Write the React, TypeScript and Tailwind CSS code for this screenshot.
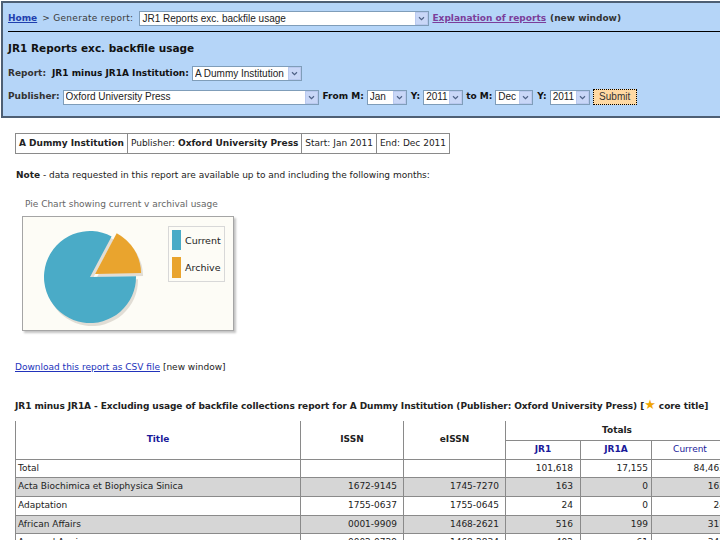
import React from "react";

type Row = { title: string; issn: string; eissn: string; jr1: string; jr1a: string; current: string };

const rows: Row[] = [
  { title: "Total", issn: "", eissn: "", jr1: "101,618", jr1a: "17,155", current: "84,463" },
  { title: "Acta Biochimica et Biophysica Sinica", issn: "1672-9145", eissn: "1745-7270", jr1: "163", jr1a: "0", current: "163" },
  { title: "Adaptation", issn: "1755-0637", eissn: "1755-0645", jr1: "24", jr1a: "0", current: "24" },
  { title: "African Affairs", issn: "0001-9909", eissn: "1468-2621", jr1: "516", jr1a: "199", current: "317" },
  { title: "Age and Ageing", issn: "0002-0729", eissn: "1468-2834", jr1: "402", jr1a: "61", current: "341" },
];

function Arrow() {
  return (
    <span className="flex h-[13px] w-[13px] shrink-0 items-center justify-center border border-[#b9c9ef] bg-[#c9d7f7]">
      <svg viewBox="0 0 8 6" className="h-[5px] w-[7px]">
        <path d="M1 1.5 L4 4.5 L7 1.5" fill="none" stroke="#4d6185" strokeWidth="1.4" />
      </svg>
    </span>
  );
}

function Sel({ value, className }: { value: string; className: string }) {
  return (
    <span className={`flex h-[15px] items-center justify-between border border-[#7f9db9] bg-white pl-[2px] text-[#222] ${className}`}>
      <span className="truncate font-['Liberation_Sans',sans-serif] text-[10px] leading-none">{value}</span>
      <Arrow />
    </span>
  );
}

export default function App() {
  return (
    <div className="relative h-[540px] w-[720px] overflow-hidden bg-white font-['DejaVu_Sans',sans-serif] text-[9px] text-[#222]">
      {/* Report form panel */}
      <div className="pl-px pt-px">
        <div className="h-[117px] border-b-2 border-l-2 border-t-2 border-[#4e5f74] bg-[#b5d5f8] pl-[5px]">
          <div className="mt-[8px] flex h-[15px] items-center">
            <a className="font-bold text-[#1f3fae] underline">Home</a>
            <span className="ml-[5px] tracking-[0.3px] text-[#3a3a3a]">&gt; Generate report:</span>
            <Sel value="JR1 Reports exc. backfile usage" className="ml-[6px] w-[290px]" />
            <a className="ml-[3px] font-bold text-[#7b3d9a] underline">Explanation of reports</a>
            <span className="ml-[4px] font-bold text-[#333]">(new window)</span>
          </div>
          <div className="mt-[5px] h-px bg-black" />

          <h1 className="mt-[9px] text-[10.5px] font-bold leading-[14px] text-[#111]">JR1 Reports exc. backfile usage</h1>

          <div className="mt-[11px] flex h-[15px] items-center">
            <span className="font-bold text-[#333]">Report:</span>
            <span className="ml-[6px] font-bold text-[#111]">JR1 minus JR1A Institution:</span>
            <Sel value="A Dummy Institution" className="ml-[3px] w-[110px]" />
          </div>

          <div className="mt-[8px] flex h-[16px] items-center">
            <span className="font-bold text-[#333]">Publisher:</span>
            <Sel value="Oxford University Press" className="ml-[3px] w-[256px]" />
            <span className="ml-[4px] font-bold text-[#111]">From M:</span>
            <Sel value="Jan" className="ml-[3px] w-[40px]" />
            <span className="ml-[4px] font-bold text-[#111]">Y:</span>
            <Sel value="2011" className="ml-[3px] w-[40px]" />
            <span className="ml-[3px] font-bold text-[#111]">to M:</span>
            <Sel value="Dec" className="ml-[3px] w-[38px]" />
            <span className="ml-[4px] font-bold text-[#111]">Y:</span>
            <Sel value="2011" className="ml-[3px] w-[40px]" />
            <button className="ml-[3px] h-[16px] w-[44px] border border-dotted border-black bg-[#ffd9a3] font-['Liberation_Sans',sans-serif] text-[10px] leading-none text-[#333]">
              Submit
            </button>
          </div>
        </div>
      </div>

      {/* Summary */}
      <table className="ml-[15px] mt-[15px] border-collapse">
        <tbody>
          <tr className="h-[20px]">
            <td className="border border-[#8a8a8a] px-[3px] font-bold">A Dummy Institution</td>
            <td className="border border-[#8a8a8a] px-[3px]">
              Publisher: <b>Oxford University Press</b>
            </td>
            <td className="border border-[#8a8a8a] px-[3px]">Start: Jan 2011</td>
            <td className="border border-[#8a8a8a] px-[3px]">End: Dec 2011</td>
          </tr>
        </tbody>
      </table>

      <p className="ml-[16px] mt-[15px] leading-[12px]">
        <b>Note</b> - data requested in this report are available up to and including the following months:
      </p>

      {/* Chart */}
      <p className="ml-[25px] mt-[17px] leading-[12px] text-[#666]">Pie Chart showing current v archival usage</p>
      <div className="ml-[22px] mt-[6px] h-[115px] w-[212px] border border-[#a5a5a5] bg-[#fdfcf6] shadow-[2px_2px_2px_#c4c4c4]">
        <svg viewBox="0 0 210 113" className="h-[113px] w-[210px]">
          <g fill="#cfcac0" opacity="0.6">
            <path d="M69,63 L115,62.2 A46,46 0 1 1 90.6,22.4 Z" />
            <path d="M74.1,59.9 L95.7,19.3 A46,46 0 0 1 120.1,59.1 Z" />
          </g>
          <path d="M67,60 L113,59.2 A46,46 0 1 1 88.6,19.4 Z" fill="#4aabc7" />
          <path d="M72.1,56.9 L93.7,16.3 A46,46 0 0 1 118.1,56.1 Z" fill="#e9a42e" />
          <rect x="145.5" y="9.5" width="56" height="55" fill="none" stroke="#d8d8d8" />
          <rect x="149" y="13" width="9" height="20" fill="#4aabc7" />
          <rect x="149" y="40" width="9" height="21" fill="#e9a42e" />
          <text x="162" y="27" fontSize="9.5" fill="#222" fontFamily="DejaVu Sans, sans-serif">Current</text>
          <text x="162" y="54" fontSize="9.5" fill="#222" fontFamily="DejaVu Sans, sans-serif">Archive</text>
        </svg>
      </div>

      <p className="ml-[15px] mt-[30px] leading-[12px]">
        <a className="text-[#2233bb] underline">Download this report as CSV file</a> [new window]
      </p>

      <p className="ml-[15px] mt-[25px] whitespace-nowrap font-bold leading-[12px] tracking-[-0.07px]">
        JR1 minus JR1A - Excluding usage of backfile collections report for A Dummy Institution (Publisher: Oxford University Press) [
        <span className="text-[13px] leading-none text-[#f0a500]">★</span> core title]
      </p>

      {/* Data table */}
      <table className="ml-[15px] mt-[9px] w-[713px] table-fixed border-collapse">
        <colgroup>
          <col className="w-[285px]" />
          <col className="w-[103px]" />
          <col className="w-[102px]" />
          <col className="w-[75px]" />
          <col className="w-[71px]" />
          <col className="w-[77px]" />
        </colgroup>
        <thead>
          <tr className="h-[19px]">
            <th rowSpan={2} className="border-x border-b border-[#8a8a8a] text-[#1a1a9a]">Title</th>
            <th rowSpan={2} className="border-x border-b border-[#8a8a8a]">ISSN</th>
            <th rowSpan={2} className="border-x border-b border-[#8a8a8a]">eISSN</th>
            <th colSpan={3} className="border-x border-b border-[#8a8a8a]">Totals</th>
          </tr>
          <tr className="h-[19px]">
            <th className="border border-[#8a8a8a] text-[#1a1a9a]">JR1</th>
            <th className="border border-[#8a8a8a] text-[#1a1a9a]">JR1A</th>
            <th className="border border-[#8a8a8a] font-normal text-[#1a1a9a]">Current</th>
          </tr>
        </thead>
        <tbody>
          {rows.map((r, i) => (
            <tr key={r.title} className={`h-[18.7px] ${i % 2 === 1 ? "bg-[#d6d6d6]" : "bg-white"}`}>
              <td className="border border-[#8a8a8a] px-[2px]">{r.title}</td>
              <td className="border border-[#8a8a8a] px-[6px] text-right">{r.issn}</td>
              <td className="border border-[#8a8a8a] px-[6px] text-right">{r.eissn}</td>
              <td className="border border-[#8a8a8a] px-[7px] text-right">{r.jr1}</td>
              <td className="border border-[#8a8a8a] px-[3px] text-right">{r.jr1a}</td>
              <td className="border border-[#8a8a8a] px-[3px] text-right">{r.current}</td>
            </tr>
          ))}
        </tbody>
      </table>
    </div>
  );
}
